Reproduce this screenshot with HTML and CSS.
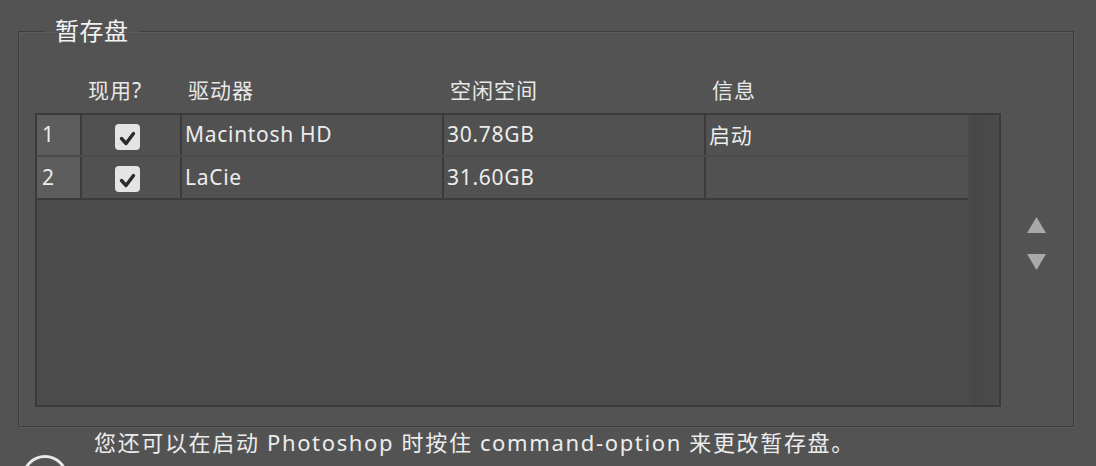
FILE: index.html
```html
<!DOCTYPE html>
<html lang="zh-CN">
<head>
<meta charset="utf-8">
<title>暂存盘</title>
<link rel="stylesheet" href="styles.css">
</head>
<body>
<fieldset class="group">
  <legend class="group-title">暂存盘</legend>
  <div class="group-body">
    <div class="list-col">
      <div class="head-row">
        <span class="head-cell"></span>
        <span class="head-cell">现用?</span>
        <span class="head-cell">驱动器</span>
        <span class="head-cell">空闲空间</span>
        <span class="head-cell">信息</span>
      </div>
      <div class="table">
        <div class="row">
          <span class="cell idx">1</span>
          <span class="cell check-cell"><span class="checkbox"><svg viewBox="0 0 25 26" width="25" height="26"><path d="M6.5 14.5 L11 19.5 L18.5 9.5" fill="none" stroke="#2b2b2b" stroke-width="3.4" stroke-linecap="round" stroke-linejoin="round"/></svg></span></span>
          <span class="cell">Macintosh HD</span>
          <span class="cell">30.78GB</span>
          <span class="cell">启动</span>
        </div>
        <div class="row">
          <span class="cell idx">2</span>
          <span class="cell check-cell"><span class="checkbox"><svg viewBox="0 0 25 26" width="25" height="26"><path d="M6.5 14.5 L11 19.5 L18.5 9.5" fill="none" stroke="#2b2b2b" stroke-width="3.4" stroke-linecap="round" stroke-linejoin="round"/></svg></span></span>
          <span class="cell">LaCie</span>
          <span class="cell">31.60GB</span>
          <span class="cell"></span>
        </div>
      </div>
    </div>
    <div class="arrows">
      <svg class="arrow" viewBox="0 0 19 16" width="19" height="16"><polygon points="9.5,0 19,16 0,16" fill="#a9a9a9"/></svg>
      <svg class="arrow" viewBox="0 0 19 16" width="19" height="16"><polygon points="0,0 19,0 9.5,16" fill="#a9a9a9"/></svg>
    </div>
  </div>
</fieldset>
<p class="hint">您还可以在启动 Photoshop 时按住 command-option 来更改暂存盘。</p>
<div class="icon-row"><span class="circle"></span></div>
</body>
</html>
```

FILE: styles.css
```css
html, body {
  margin: 0;
  padding: 0;
  height: 466px;
  overflow: hidden;
  background: #535353;
  color: #e6e6e6;
  font-family: "Noto Sans", "Noto Sans CJK SC", sans-serif;
}

.group {
  box-sizing: border-box;
  width: 1056px;
  margin: 18px 0 0 18px;
  padding: 0 0 19px 16px;
  border: 1px solid #3e3e3e;
  box-shadow: inset 1px 1px 0 #5c5c5c, 1px 1px 0 #5c5c5c;
}

.group-title {
  margin-left: 10px;
  padding: 0 10px;
  font-size: 24px;
  line-height: 26px;
  color: #f2f2f2;
  letter-spacing: 0.5px;
}

.group-body {
  display: flex;
  align-items: flex-start;
  gap: 26px;
}

.list-col {
  display: flex;
  flex-direction: column;
}

.head-row,
.row {
  display: grid;
  grid-template-columns: 43px 98px 260px 260px 262px;
  column-gap: 2px;
}

.head-row {
  margin: 34px 0 11px 2px;
  height: 24px;
}

.head-cell {
  padding-left: 6px;
  font-size: 21px;
  line-height: 24px;
  letter-spacing: 1px;
  color: #e8e8e8;
}

.table {
  box-sizing: border-box;
  width: 966px;
  height: 294px;
  border: 2px solid #3a3a3a;
  background: linear-gradient(90deg, #4b4b4b 0, #4b4b4b 931px, #474747 936px, #4b4b4b 962px);
  display: flex;
  flex-direction: column;
  gap: 2px;
}

.row {
  width: 931px;
  height: 40px;
  background: #3b3b3b;
}

.row + .row {
  height: 41px;
}

.row:last-child {
  border-bottom: 2px solid #3b3b3b;
}

.cell {
  display: flex;
  align-items: center;
  padding-left: 3px;
  padding-bottom: 2px;
  background: #515151;
  font-size: 21px;
  letter-spacing: 0.7px;
  color: #ececec;
}

.cell.idx {
  padding-left: 5px;
  background: #5d5d5d;
}

.check-cell {
  padding-left: 33px;
  padding-bottom: 0;
}

.checkbox {
  display: block;
  width: 25px;
  height: 26px;
  border-radius: 4px;
  background: #e4e4e4;
  margin-top: 3px;
}

.checkbox svg {
  display: block;
}

.arrows {
  display: flex;
  flex-direction: column;
  gap: 21px;
  margin-top: 173px;
}

.arrow {
  display: block;
}

.hint {
  margin: 3px 0 0 94px;
  font-size: 22px;
  line-height: 25px;
  letter-spacing: 1.65px;
  color: #ececec;
}

.icon-row {
  display: flex;
  padding-left: 22px;
}

.circle {
  display: block;
  width: 40px;
  height: 40px;
  border: 3px solid #e8e8e8;
  border-radius: 50%;
}
```
